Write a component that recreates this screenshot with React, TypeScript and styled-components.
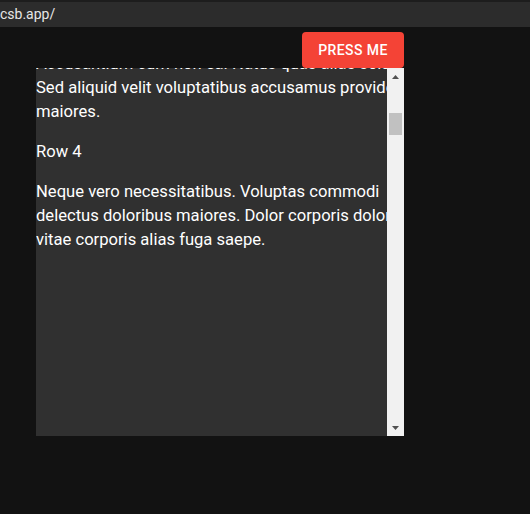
import React, { useLayoutEffect, useRef, useState } from "react";
import styled, { createGlobalStyle } from "styled-components";

const Global = createGlobalStyle`
  html, body { margin: 0; padding: 0; background: #121212; }
  body { font-family: Roboto, "Liberation Sans", Arial, sans-serif; overflow: hidden; }
`;

const Page = styled.div`
  width: 530px;
  height: 514px;
  background: #121212;
  display: flex;
  flex-direction: column;
`;

const AddressBar = styled.div`
  height: 25px;
  border-top: 2px solid #1d1d1d;
  background: #2c2c2c;
  color: #e6e6e6;
  font-size: 14px;
  line-height: 25px;
  white-space: nowrap;
  overflow: hidden;
`;

const Column = styled.div`
  width: 368px;
  margin: 5px 0 0 36px;
  display: flex;
  flex-direction: column;
  align-items: flex-end;
`;

const PressButton = styled.button`
  width: 102px;
  height: 36px;
  border: 0;
  border-radius: 4px;
  background: #f44336;
  color: #fff;
  font-family: Roboto, "Liberation Sans", Arial, sans-serif;
  font-size: 14px;
  font-weight: 500;
  letter-spacing: 0.4px;
  text-transform: uppercase;
  cursor: pointer;
  padding: 0;
`;

const ScrollBox = styled.div`
  width: 368px;
  height: 368px;
  background: #303030;
  display: flex;
`;

const Viewport = styled.div`
  flex: 1;
  min-width: 0;
  height: 100%;
  overflow: hidden;
`;

const Content = styled.div`
  width: 392px;
  color: #ffffff;
  font-size: 16.6px;
  line-height: 24px;
  padding-top: 1px;
`;

const Para = styled.p`
  margin: 16px 0;
`;

const Spacer = styled.div<{ $h: number }>`
  height: ${(p) => p.$h}px;
`;

const Track = styled.div`
  width: 17px;
  height: 100%;
  background: #f1f1f1;
  display: flex;
  flex-direction: column;
`;

const ArrowButton = styled.div`
  height: 17px;
  flex: none;
  display: flex;
  align-items: center;
  justify-content: center;
`;

const Rail = styled.div`
  flex: 1;
  position: relative;
`;

const Thumb = styled.div`
  position: absolute;
  left: 2px;
  right: 2px;
  background: #c1c1c1;
`;

const Arrow = ({ down }: { down?: boolean }) => (
  <svg width="7" height="4" viewBox="0 0 7 4">
    <polygon
      points={down ? "0,0 7,0 3.5,4" : "0,4 7,4 3.5,0"}
      fill="#505050"
    />
  </svg>
);

const rows = [
  "Cras mattis consectetur purus sit amet fermentum. Cras justo odio, dapibus ac facilisis in, egestas eget quam. Morbi leo risus, porta ac consectetur ac, vestibulum at eros. Praesent commodo cursus magna, vel scelerisque nisl consectetur et. Aenean lacinia bibendum nulla sed.",
  "Praesent commodo cursus magna, vel scelerisque nisl consectetur et. Vivamus sagittis lacus vel augue laoreet rutrum faucibus dolor auctor. Aenean lacinia bibendum nulla sed consectetur. Praesent commodo cursus magna, vel scelerisque nisl consectetur et. Donec sed odio dui.",
  "Accusantium cum non ea. Natus quas alias soluta. Sed aliquid velit voluptatibus accusamus provident maiores.",
  "Neque vero necessitatibus. Voluptas commodi delectus doloribus maiores. Dolor corporis dolores vitae corporis alias fuga saepe.",
];

export default function App() {
  const viewRef = useRef<HTMLDivElement>(null);
  const row4Ref = useRef<HTMLParagraphElement>(null);
  const [thumb, setThumb] = useState({ top: 25, len: 22 });

  useLayoutEffect(() => {
    const v = viewRef.current;
    const r = row4Ref.current;
    if (!v || !r) return;
    v.scrollTop = r.offsetTop - v.offsetTop - 72;
    const trackLen = v.clientHeight - 34;
    const len = Math.max(18, Math.round((trackLen * v.clientHeight) / v.scrollHeight));
    const top = Math.round(((trackLen - len) * v.scrollTop) / (v.scrollHeight - v.clientHeight));
    setThumb({ top, len });
  }, []);

  return (
    <Page>
      <Global />
      <AddressBar>csb.app/</AddressBar>
      <Column>
        <PressButton>Press me</PressButton>
        <ScrollBox>
          <Viewport ref={viewRef}>
            <Content>
              {rows.map((t, i) => (
                <React.Fragment key={i}>
                  <Para ref={i === 3 ? row4Ref : undefined}>Row {i + 1}</Para>
                  <Para>{t}</Para>
                </React.Fragment>
              ))}
              <Spacer $h={4950} />
            </Content>
          </Viewport>
          <Track>
            <ArrowButton>
              <Arrow />
            </ArrowButton>
            <Rail>
              <Thumb style={{ top: thumb.top, height: thumb.len }} />
            </Rail>
            <ArrowButton>
              <Arrow down />
            </ArrowButton>
          </Track>
        </ScrollBox>
      </Column>
    </Page>
  );
}
